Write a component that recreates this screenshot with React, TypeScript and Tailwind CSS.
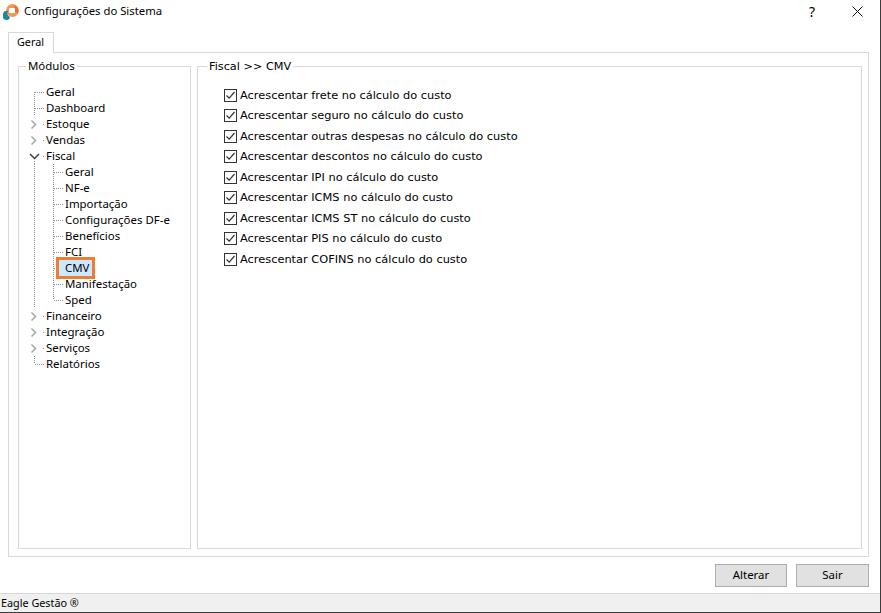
const uiFont = "font-['Noto_Sans',sans-serif]"

type Guide = 'first' | 'tee' | 'last' | 'pipe' | 'closed' | 'open'

interface TreeItem {
  label: string
  guides: Guide[]
  selected?: boolean
}

const tree: TreeItem[] = [
  { label: 'Geral', guides: ['first'] },
  { label: 'Dashboard', guides: ['tee'] },
  { label: 'Estoque', guides: ['closed'] },
  { label: 'Vendas', guides: ['closed'] },
  { label: 'Fiscal', guides: ['open'] },
  { label: 'Geral', guides: ['pipe', 'tee'] },
  { label: 'NF-e', guides: ['pipe', 'tee'] },
  { label: 'Importação', guides: ['pipe', 'tee'] },
  { label: 'Configurações DF-e', guides: ['pipe', 'tee'] },
  { label: 'Benefícios', guides: ['pipe', 'tee'] },
  { label: 'FCI', guides: ['pipe', 'tee'] },
  { label: 'CMV', guides: ['pipe', 'tee'], selected: true },
  { label: 'Manifestação', guides: ['pipe', 'tee'] },
  { label: 'Sped', guides: ['pipe', 'last'] },
  { label: 'Financeiro', guides: ['closed'] },
  { label: 'Integração', guides: ['closed'] },
  { label: 'Serviços', guides: ['closed'] },
  { label: 'Relatórios', guides: ['last'] },
]

const options = [
  'Acrescentar frete no cálculo do custo',
  'Acrescentar seguro no cálculo do custo',
  'Acrescentar outras despesas no cálculo do custo',
  'Acrescentar descontos no cálculo do custo',
  'Acrescentar IPI no cálculo do custo',
  'Acrescentar ICMS no cálculo do custo',
  'Acrescentar ICMS ST no cálculo do custo',
  'Acrescentar PIS no cálculo do custo',
  'Acrescentar COFINS no cálculo do custo',
]

function GuideCell({ kind }: { kind: Guide }) {
  const dots = { stroke: '#8f8f8f', strokeWidth: 1, strokeDasharray: '1 1' }
  return (
    <svg width={kind === 'pipe' ? 19 : 12} height="16" className="shrink-0 overflow-visible">
      {(kind === 'tee' || kind === 'pipe') && <line x1="0.5" y1="0" x2="0.5" y2="16" {...dots} />}
      {kind === 'first' && <line x1="0.5" y1="8" x2="0.5" y2="16" {...dots} />}
      {kind === 'last' && <line x1="0.5" y1="0" x2="0.5" y2="8" {...dots} />}
      {kind === 'open' && <line x1="0.5" y1="13" x2="0.5" y2="16" {...dots} />}
      {(kind === 'first' || kind === 'tee' || kind === 'last') && <line x1="1" y1="8.5" x2="10" y2="8.5" {...dots} />}
      {(kind === 'closed' || kind === 'open') && <line x1="9" y1="8.5" x2="10" y2="8.5" {...dots} />}
      {kind === 'closed' && <path d="M-2.5 4.5 L1.5 8.5 L-2.5 12.5" fill="none" stroke="#a6a6a6" strokeWidth="1.5" />}
      {kind === 'open' && <path d="M-4 6 L0.5 10.5 L5 6" fill="none" stroke="#404040" strokeWidth="1.5" />}
    </svg>
  )
}

function TreeRow({ item }: { item: TreeItem }) {
  return (
    <div className="flex h-4 items-center">
      {item.guides.map((g, i) => (
        <GuideCell key={i} kind={g} />
      ))}
      <span
        className={
          item.selected
            ? 'relative -ml-[6px] bg-[#cce8ff] pr-[3px] pl-[6px] leading-4 outline-3 outline-[#ed7d31]'
            : 'leading-4'
        }
      >
        {item.label}
      </span>
    </div>
  )
}

function CheckRow({ label }: { label: string }) {
  return (
    <label className="flex h-[20.5px] items-center gap-[3px]">
      <span className="flex size-[13px] shrink-0 items-center justify-center border border-[#333333] bg-white">
        <svg width="11" height="11" viewBox="0 0 11 11">
          <path d="M1.5 5.5 L4.2 8.2 L9.5 2" fill="none" stroke="#333333" strokeWidth="1.2" />
        </svg>
      </span>
      <span className="font-['DejaVu_Sans',sans-serif] text-[11.37px] leading-none">{label}</span>
    </label>
  )
}

export default function App() {
  return (
    <div className={`flex h-[613px] w-[881px] flex-col border-r border-b border-[#3c3c3c] bg-white text-[11.45px] text-black ${uiFont}`}>
      <header className="flex h-[23px] shrink-0 items-center">
        <svg width="24" height="23" viewBox="0 0 24 23" className="shrink-0">
          <circle cx="12.5" cy="10.5" r="6.5" fill="#ee9a5c" />
          <path d="M14 5 a6.5 6.5 0 0 1 4 8 l-3 -1 z" fill="#e2772b" />
          <rect x="9" y="8" width="6" height="5" rx="1" fill="#fff" />
          <path d="M3 14 a3.5 3.5 0 0 1 5 -3 a4 4 0 0 0 2 6 a3.5 3.5 0 0 1 -7 -1 z" fill="#1f8a96" />
        </svg>
        <span className="text-[11.3px]">Configurações do Sistema</span>
        <span className="ml-auto mr-[37px] text-[14px]">?</span>
        <svg width="11" height="11" viewBox="0 0 11 11" className="mr-[17px]">
          <path d="M0.5 0.5 L10.5 10.5 M10.5 0.5 L0.5 10.5" stroke="#111" strokeWidth="1" />
        </svg>
      </header>

      <div className="mt-[9px] flex shrink-0 pl-2">
        <div className="relative z-10 -mb-px flex h-[21px] w-[46px] items-center justify-center border border-b-0 border-[#d9d9d9] bg-white pr-px pb-[2px] text-[10.8px]">
          Geral
        </div>
      </div>

      <main className="ml-2 mr-[11px] flex h-[505px] shrink-0 gap-[6px] border border-[#d9d9d9] pt-[5px] pr-[6px] pb-[7px] pl-[9px]">
        <fieldset className="w-[173px] shrink-0 border border-[#d9d9d9]">
          <legend className="ml-[7px] px-[2px] leading-4">Módulos</legend>
          <div className="pt-[10px] pl-[15px]">
            {tree.map((item, i) => (
              <TreeRow key={i} item={item} />
            ))}
          </div>
        </fieldset>
        <fieldset className="flex-1 border border-[#d9d9d9]">
          <legend className="ml-[9px] translate-y-px px-[2px] font-['DejaVu_Sans',sans-serif] text-[11.27px] leading-4">Fiscal &gt;&gt; CMV</legend>
          <div className="pt-[11px] pl-[26px]">
            {options.map(o => (
              <CheckRow key={o} label={o} />
            ))}
          </div>
        </fieldset>
      </main>

      <footer className="flex flex-1 justify-end gap-[9px] pt-[7px] pr-[11px]">
        <button className="h-[23px] w-[72px] border border-[#adadad] bg-[#e1e1e1] pb-px">Alterar</button>
        <button className="h-[23px] w-[73px] border border-[#adadad] bg-[#e1e1e1] pb-px">Sair</button>
      </footer>

      <div className="flex h-[19px] shrink-0 items-center border-t border-[#d7d7d7] bg-[#f0f0f0] pl-px text-[10.8px]">
        Eagle Gestão ®
      </div>
    </div>
  )
}
